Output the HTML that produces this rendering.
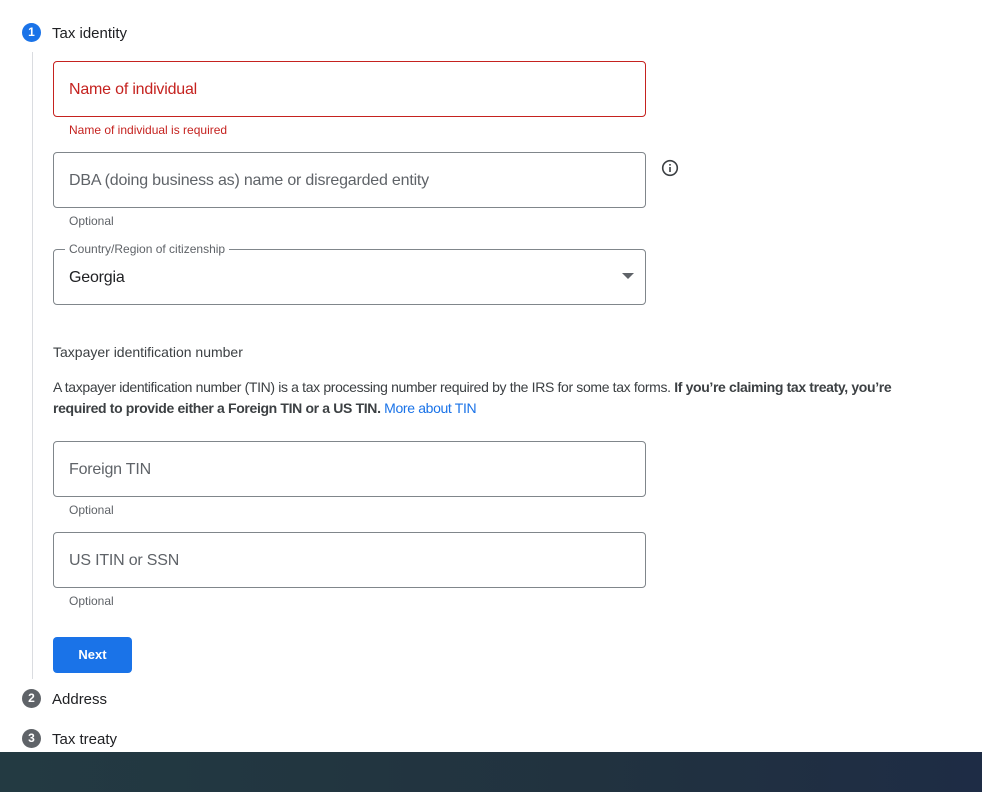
<!DOCTYPE html>
<html><head><style>
body{margin:0;width:982px;height:792px;background:#fff;font-family:"Liberation Sans",sans-serif;position:relative;overflow:hidden;color:#3c4043}
.a{position:absolute;white-space:nowrap}
.f{position:absolute;left:53px;width:591px;height:54px;border:1px solid #80868b;border-radius:4px}
.ph{position:absolute;left:69px;font-size:16px;color:#5f6368;letter-spacing:-0.2px}
.hint{position:absolute;left:69px;font-size:12px;color:#5f6368}
.step{position:absolute;left:22px;width:19px;height:19px;border-radius:50%;color:#fff;font-size:12px;font-weight:bold;text-align:center;line-height:19px}
.st{position:absolute;left:52px;font-size:15px;color:#202124}
</style></head><body>
<div class="step" style="top:23px;background:#1a73e8">1</div>
<div class="st" style="top:25px">Tax identity</div>
<div class="a" style="left:32px;top:52px;width:1px;height:627px;background:#dadce0"></div>

<div class="f" style="top:61px;border-color:#c5221f"></div>
<div class="ph" style="top:81px;color:#c5221f">Name of individual</div>
<div class="hint" style="top:123px;color:#c5221f">Name of individual is required</div>

<div class="f" style="top:152px"></div>
<div class="ph" style="top:172px">DBA (doing business as) name or disregarded entity</div>
<svg class="a" style="left:661px;top:159px" width="18" height="18" viewBox="0 0 18 18"><circle cx="9" cy="9" r="7.3" fill="none" stroke="#3c4043" stroke-width="1.6"/><rect x="8.2" y="8" width="1.6" height="5" fill="#3c4043"/><rect x="8.2" y="5" width="1.6" height="1.6" fill="#3c4043"/></svg>
<div class="hint" style="top:214px">Optional</div>

<div class="f" style="top:249px"></div>
<div class="a" style="left:65px;top:242px;background:#fff;padding:0 4px;font-size:12px;color:#5f6368">Country/Region of citizenship</div>
<div class="ph" style="top:269px;color:#202124">Georgia</div>
<div class="a" style="left:622px;top:273px;width:0;height:0;border-left:6px solid transparent;border-right:6px solid transparent;border-top:6px solid #5f6368"></div>

<div class="a" style="left:53px;top:344px;font-size:14px;color:#3c4043">Taxpayer identification number</div>
<div class="a" style="left:53px;top:377px;font-size:14px;line-height:21px;color:#3c4043;letter-spacing:-0.35px;white-space:normal;width:890px">A taxpayer identification number (TIN) is a tax processing number required by the IRS for some tax forms. <b>If you’re claiming tax treaty, you’re required to provide either a Foreign TIN or a US TIN.</b> <span style="color:#1a73e8">More about TIN</span></div>

<div class="f" style="top:441px"></div>
<div class="ph" style="top:461px">Foreign TIN</div>
<div class="hint" style="top:503px">Optional</div>

<div class="f" style="top:532px"></div>
<div class="ph" style="top:552px">US ITIN or SSN</div>
<div class="hint" style="top:594px">Optional</div>

<div class="a" style="left:53px;top:637px;width:79px;height:36px;background:#1a73e8;border-radius:4px;color:#fff;font-size:13px;font-weight:bold;text-align:center;line-height:36px">Next</div>

<div class="step" style="top:689px;background:#5f6368">2</div>
<div class="st" style="top:691px">Address</div>
<div class="step" style="top:729px;background:#5f6368">3</div>
<div class="st" style="top:731px">Tax treaty</div>

<div class="a" style="left:0;top:752px;width:982px;height:40px;background:linear-gradient(90deg,#233a42,#21323f 60%,#1e2c45)"></div>
</body></html>
